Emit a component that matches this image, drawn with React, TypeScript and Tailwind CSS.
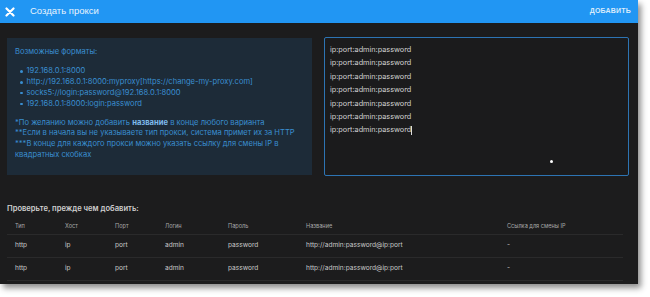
import React from "react";

const rows = [
  ["http", "ip", "port", "admin", "password", "http://admin:password@ip:port", "-"],
  ["http", "ip", "port", "admin", "password", "http://admin:password@ip:port", "-"],
];

const cols = ["w-[50px]", "w-[50px]", "w-[50px]", "w-[63px]", "w-[78px]", "w-[201px]", "flex-1"];
const heads = ["Тип", "Хост", "Порт", "Логин", "Пароль", "Название", "Ссылка для смены IP"];

export default function App() {
  return (
    <div className="w-[650px] h-[297px] bg-white overflow-hidden" style={{ fontFamily: "Inter, 'Noto Sans', sans-serif" }}>
      <div className="w-[638px] h-[284px] bg-[#1c1c1d] flex flex-col shadow-[3px_4px_6px_rgba(0,0,0,0.45)]">
        <div className="h-[23px] bg-[#2196f3] flex items-center pl-[5px] pr-[7px] shrink-0">
          <svg width="10" height="10" viewBox="0 0 10 10" className="shrink-0">
            <path d="M1.5 1.5 L8.5 8.5 M8.5 1.5 L1.5 8.5" stroke="#fff" strokeWidth="2.2" strokeLinecap="round" />
          </svg>
          <div className="ml-[15px] text-[9.5px] text-[#e8f3fd]" style={{ fontFamily: "'Liberation Sans', Arial, sans-serif" }}>Создать прокси</div>
          <div className="ml-auto text-[7px] font-bold tracking-[0.2px] text-[#d8ebfb]" style={{ fontFamily: "'Liberation Sans', Arial, sans-serif" }}>ДОБАВИТЬ</div>
        </div>
        <div className="flex pl-[7px] pr-[9px] pt-[15px] gap-[12px]">
          <div className="w-[305px] h-[137px] bg-[#1d2b38] px-[8px] pt-[9px] text-[7.6px] text-[#3a8ed0] leading-[10.9px]">
            <div>Возможные форматы:</div>
            <ul className="mt-[8px] pl-[5px]">
              {["192.168.0.1:8000", "http://192.168.0.1:8000:myproxy[https://change-my-proxy.com]", "socks5://login:password@192.168.0.1:8000", "192.168.0.1:8000:login:password"].map((t) => (
                <li key={t} className="flex items-center">
                  <span className="w-[2.5px] h-[2.5px] rounded-full bg-[#3a8ed0] mr-[4px]" />
                  {t}
                </li>
              ))}
            </ul>
            <div className="mt-[8px]">
              *По желанию можно добавить <b className="text-[#7fbbec]">название</b> в конце любого варианта
            </div>
            <div>**Если в начала вы не указываете тип прокси, система примет их за HTTP</div>
            <div>***В конце для каждого прокси можно указать ссылку для смены IP в<br />квадратных скобках</div>
          </div>
          <div className="relative flex-1 h-[139px] -mt-[1px] border border-[#2d74b3] rounded-[2px] bg-[#1b1b1c] px-[5px] pt-[5px] text-[7.3px] leading-[13.4px] text-[#d2d2d2]">
            {Array.from({ length: 7 }).map((_, i) => (
              <div key={i}>
                ip:port:admin:password{i === 6 && <span className="inline-block w-[1px] h-[9px] bg-[#ddd] align-middle" />}
              </div>
            ))}
            <div className="absolute left-[225px] top-[122px] w-[3px] h-[3px] bg-white rounded-full" />
          </div>
        </div>
        <div className="px-[7px] mt-[27px]">
          <div className="text-[7.6px] font-semibold text-[#cfcfcf]">Проверьте, прежде чем добавить:</div>
          <div className="mr-[8px] mt-[3px]">
            <div className="flex h-[18px] items-center pl-[8px] text-[5.6px] text-[#a9a9a9] border-b border-[#2a2a2b]">
              {heads.map((h, i) => (
                <div key={h} className={cols[i]}>{h}</div>
              ))}
            </div>
            {rows.map((r, ri) => (
              <div key={ri} className="flex h-[23px] items-center pl-[8px] text-[6.6px] text-[#c9c9c9] border-b border-[#2a2a2b]">
                {r.map((c, i) => (
                  <div key={i} className={cols[i]}>{c}</div>
                ))}
              </div>
            ))}
          </div>
        </div>
      </div>
    </div>
  );
}
